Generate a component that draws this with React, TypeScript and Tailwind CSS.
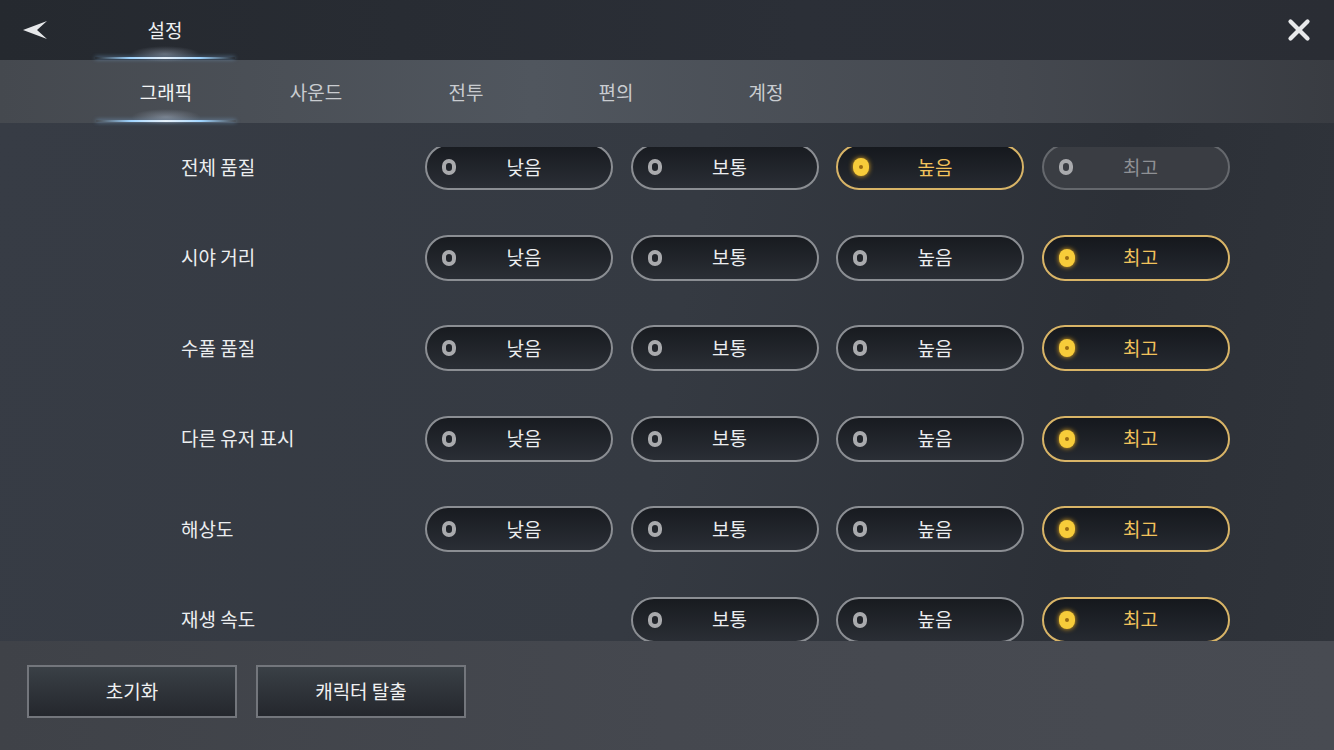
import { X } from "lucide-react";

const OPTIONS = ["낮음", "보통", "높음", "최고"];

const rows = [
  { label: "전체 품질", selected: 2, disabled: [3] },
  { label: "시야 거리", selected: 3 },
  { label: "수풀 품질", selected: 3 },
  { label: "다른 유저 표시", selected: 3 },
  { label: "해상도", selected: 3 },
  { label: "재생 속도", selected: 3, hidden: [0] },
];

const tabs = ["그래픽", "사운드", "전투", "편의", "계정"];

const Glow = () => (
  <div className="relative h-[4px] w-[140px]">
    <div className="absolute inset-x-0 top-[1px] h-[2px] rounded-full bg-[linear-gradient(90deg,transparent,#9fd4ff_25%,#eef8ff_50%,#9fd4ff_75%,transparent)] shadow-[0_0_4px_rgba(140,200,255,0.6)]" />
    <div className="absolute left-[35px] right-[35px] -top-[10px] h-[16px] rounded-full bg-[radial-gradient(ellipse_at_center,rgba(190,205,225,0.4),transparent_70%)]" />
  </div>
);

const Radio = ({ on }: { on: boolean }) =>
  on ? (
    <div className="flex h-[18px] w-[16px] items-center justify-center rounded-full bg-[#f7cc3a] shadow-[0_0_5px_#f0b020]">
      <div className="h-[4px] w-[4px] rounded-full bg-[#9a6c12]" />
    </div>
  ) : (
    <div className="h-[16px] w-[14px] rounded-full border-[4px] border-[#a9aaad]" />
  );

const Option = ({ text, on, disabled }: { text: string; on: boolean; disabled?: boolean }) => (
  <div
    className={
      "relative flex h-[46px] w-[188px] items-center rounded-full border-2 " +
      (on
        ? "border-[#d8b467] bg-[linear-gradient(180deg,#15181d,#262a31)]"
        : disabled
          ? "border-[#65686d] bg-[#3a3d43]"
          : "border-[#8b8e93] bg-[linear-gradient(180deg,#181b20,#2a2e35)]")
    }
  >
    <div className="absolute left-[15px] top-1/2 -translate-y-1/2">
      <Radio on={on} />
    </div>
    <span
      className={
        "w-full pl-[10px] text-center text-[19px] " +
        (on ? "text-[#f2c35c]" : disabled ? "text-[#8f9195]" : "text-[#eceef0]")
      }
    >
      {text}
    </span>
  </div>
);

export default function App() {
  return (
    <div className="flex h-[750px] w-[1334px] flex-col overflow-hidden bg-[#343840] font-['Noto_Sans_CJK_KR','Noto_Sans',sans-serif] text-white">
      {/* header */}
      <div className="flex h-[60px] items-center bg-[linear-gradient(90deg,#25292f,#2b2f37_60%,#2a2d34)]">
        <svg width="26" height="24" viewBox="0 0 26 24" className="ml-[22px]">
          <path d="M25 3 L1 12 L25 21 L15 12 Z" fill="#e6e8ea" />
        </svg>
        <div className="ml-[47px] flex w-[140px] flex-col items-center">
          <span className="mt-[16px] text-[19px] leading-[28px] text-[#eef0f2]">설정</span>
          <div className="mt-[12px]">
            <Glow />
          </div>
        </div>
        <X className="ml-auto mr-[18px] h-[34px] w-[34px] text-[#e8e9eb]" strokeWidth={3} />
      </div>

      {/* tabs */}
      <div className="flex h-[63px] bg-[linear-gradient(90deg,#45494f,#50565e_40%,#454950_75%,#393c42)] pl-[91px]">
        {tabs.map((t, i) => (
          <div key={t} className="flex w-[150px] flex-col items-center">
            <span
              className={
                "mt-[18px] text-[19px] leading-[28px] " + (i === 0 ? "text-[#f4f5f6]" : "text-[#c9ccd0]")
              }
            >
              {t}
            </span>
            {i === 0 && (
              <div className="mt-[13px]">
                <Glow />
              </div>
            )}
          </div>
        ))}
      </div>

      {/* list */}
      <div className="flex-1 bg-[linear-gradient(100deg,#373c45,#353a42_50%,#2c3037_80%,#30343b)] pt-[24px]">
        <div className="h-[494px] overflow-hidden">
          <div className="-mt-[3px] flex flex-col">
            {rows.map((r) => (
              <div key={r.label} className="flex h-[90.5px] items-start">
                <div className="flex h-[46px] w-[425px] items-center pl-[181px] text-[19px] text-[#eceef0]">
                  {r.label}
                </div>
                <div className="flex gap-[17.5px]">
                  {OPTIONS.map((o, i) =>
                    r.hidden?.includes(i) ? (
                      <div key={o} className="w-[188px]" />
                    ) : (
                      <Option key={o} text={o} on={r.selected === i} disabled={r.disabled?.includes(i)} />
                    ),
                  )}
                </div>
              </div>
            ))}
          </div>
        </div>
      </div>

      {/* footer */}
      <div className="flex h-[109px] gap-[19px] bg-[linear-gradient(90deg,#3f4248,#45484f_50%,#484b52)] pl-[27px] pt-[24px]">
        {["초기화", "캐릭터 탈출"].map((b) => (
          <div
            key={b}
            className="flex h-[53px] w-[210px] items-center justify-center border-2 border-[#73767c] bg-[linear-gradient(180deg,#3a4046,#24272d)] text-[19px] text-[#f0f1f2]"
          >
            {b}
          </div>
        ))}
      </div>
    </div>
  );
}
